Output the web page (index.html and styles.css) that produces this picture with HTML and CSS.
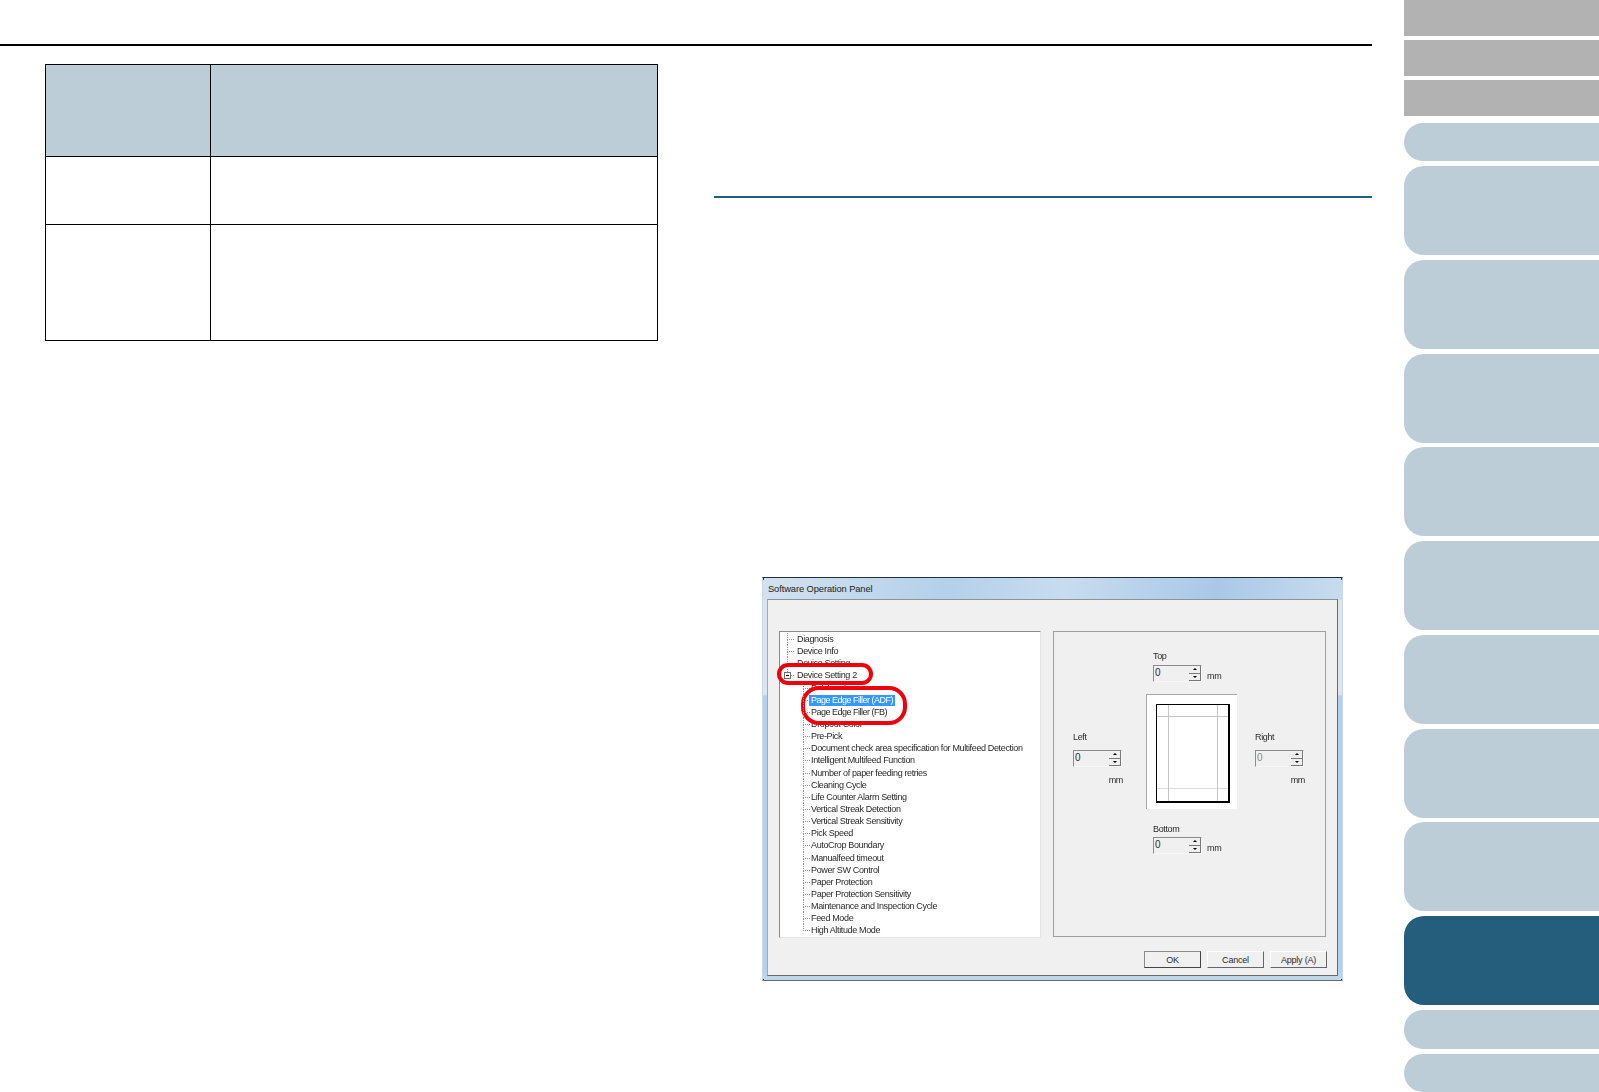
FILE: index.html
```html
<!DOCTYPE html>
<html lang="en">
<head>
<meta charset="utf-8">
<title>Software Operation Panel</title>
<link rel="stylesheet" href="styles.css">
</head>
<body>
<div class="page">
  <main class="main">
    <div class="top-rule"></div>
    <div class="columns">
      <section class="col-left">
        <table class="info-table">
          <colgroup><col class="col-a"><col class="col-b"></colgroup>
          <tr class="row-head"><th></th><th></th></tr>
          <tr class="row-short"><td></td><td></td></tr>
          <tr class="row-tall"><td></td><td></td></tr>
        </table>
      </section>
      <section class="col-right">
        <div class="section-rule"></div>
        <div class="dialog">
          <div class="title-bar">Software Operation Panel</div>
          <div class="client">
            <div class="panes">
              <div class="tree">
                <div class="mark mark-a"></div>
                <div class="mark mark-b"></div>
                <ul class="tree-list">
                  <li class="row top">Diagnosis</li>
                  <li class="row top">Device Info</li>
                  <li class="row top">Device Setting</li>
                  <li class="row top raised last"><span class="expander"></span>Device Setting 2</li>
                  <li class="row child">Patchcode</li>
                  <li class="row child raised edge"><span class="selected">Page Edge Filler (ADF)</span></li>
                  <li class="row child raised edge">Page Edge Filler (FB)</li>
                  <li class="row child">Dropout Color</li>
                  <li class="row child">Pre-Pick</li>
                  <li class="row child">Document check area specification for Multifeed Detection</li>
                  <li class="row child">Intelligent Multifeed Function</li>
                  <li class="row child">Number of paper feeding retries</li>
                  <li class="row child">Cleaning Cycle</li>
                  <li class="row child">Life Counter Alarm Setting</li>
                  <li class="row child">Vertical Streak Detection</li>
                  <li class="row child">Vertical Streak Sensitivity</li>
                  <li class="row child">Pick Speed</li>
                  <li class="row child">AutoCrop Boundary</li>
                  <li class="row child">Manualfeed timeout</li>
                  <li class="row child">Power SW Control</li>
                  <li class="row child">Paper Protection</li>
                  <li class="row child">Paper Protection Sensitivity</li>
                  <li class="row child">Maintenance and Inspection Cycle</li>
                  <li class="row child">Feed Mode</li>
                  <li class="row child last">High Altitude Mode</li>
                </ul>
              </div>
              <div class="settings">
                <div class="side side-left">
                  <div class="label">Left</div>
                  <div class="spin"><span class="spin-value">0</span><span class="spin-buttons"><i class="up"></i><i class="down"></i></span></div>
                  <div class="unit-below">mm</div>
                </div>
                <div class="center">
                  <div class="label label-inset">Top</div>
                  <div class="spin-line">
                    <div class="spin"><span class="spin-value">0</span><span class="spin-buttons"><i class="up"></i><i class="down"></i></span></div>
                    <span class="unit">mm</span>
                  </div>
                  <div class="preview">
                    <div class="sheet">
                      <div class="guides"></div>
                    </div>
                  </div>
                  <div class="label label-inset label-bottom">Bottom</div>
                  <div class="spin-line spin-line-bottom">
                    <div class="spin"><span class="spin-value">0</span><span class="spin-buttons"><i class="up"></i><i class="down"></i></span></div>
                    <span class="unit">mm</span>
                  </div>
                </div>
                <div class="side side-right">
                  <div class="label">Right</div>
                  <div class="spin spin-disabled"><span class="spin-value">0</span><span class="spin-buttons"><i class="up"></i><i class="down"></i></span></div>
                  <div class="unit-below">mm</div>
                </div>
              </div>
            </div>
            <div class="actions">
              <button class="btn btn-default">OK</button>
              <button class="btn">Cancel</button>
              <button class="btn">Apply (A)</button>
            </div>
          </div>
        </div>
      </section>
    </div>
  </main>
  <nav class="sidebar">
    <div class="tab tab-gray"></div>
    <div class="tab tab-gray"></div>
    <div class="tab tab-gray"></div>
    <div class="tab tab-pill tab-first"></div>
    <div class="tab tab-big"></div>
    <div class="tab tab-big"></div>
    <div class="tab tab-big"></div>
    <div class="tab tab-big"></div>
    <div class="tab tab-big"></div>
    <div class="tab tab-big"></div>
    <div class="tab tab-big"></div>
    <div class="tab tab-big"></div>
    <div class="tab tab-big tab-active"></div>
    <div class="tab tab-pill tab-after"></div>
    <div class="tab tab-pill tab-last"></div>
  </nav>
</div>
</body>
</html>
```

FILE: styles.css
```css
html, body {
  margin: 0;
  padding: 0;
  background: #fff;
  overflow: hidden;
}
.page {
  display: flex;
  width: 1599px;
  height: 1092px;
  font-family: "Liberation Sans", Arial, sans-serif;
}
.main {
  width: 1372px;
  padding-top: 44px;
}
.top-rule {
  height: 2px;
  background: #000;
}
.columns {
  display: flex;
}
.col-left {
  width: 714px;
  padding: 18px 0 0 45px;
  box-sizing: border-box;
}
.col-right {
  flex: 1;
  padding-top: 150px;
}
.info-table {
  border-collapse: collapse;
  table-layout: fixed;
  width: 612px;
}
.col-a { width: 165px; }
.col-b { width: 447px; }
.info-table th, .info-table td {
  border: 1px solid #000;
  padding: 0;
}
.info-table th { background: #bdcdd8; }
.row-head { height: 92px; }
.row-short { height: 68px; }
.row-tall { height: 116px; }
.section-rule {
  height: 2px;
  background: #255e7c;
}

/* dialog */
.dialog {
  width: 581px;
  height: 404px;
  margin: 379px 0 0 48px;
  box-sizing: border-box;
  padding: 0 4px 4px;
  border: 1px solid #c8d8e6;
  border-top-color: #1f2f3d;
  border-bottom-color: #5f6f7c;
  background-origin: border-box;
  background-repeat: no-repeat;
  background-image:
    linear-gradient(#1f3a50, #1f3a50),
    linear-gradient(#1f3a50, #1f3a50),
    linear-gradient(#1f3a50, #1f3a50),
    linear-gradient(#1f3a50, #1f3a50),
    linear-gradient(100deg, #d3e2ef 0, #b4d0ea 32%, #c8dcef 52%, #a9c8e8 78%, #c9dcee 100%),
    linear-gradient(180deg, #dce5ee 0, #dce5ee 29%, #b3d0ee 29.5%, #b3d0ee 97%, #c5d8e8 100%);
  background-size: 2px 3px, 2px 3px, 2px 2px, 2px 2px, 100% 23px, 100% 100%;
  background-position: 0 0, 100% 0, 0 100%, 100% 100%, 0 0, 0 0;
  display: flex;
  flex-direction: column;
  color: #2a2a2a;
  font-size: 9px;
  letter-spacing: -0.36px;
}
.title-bar {
  height: 21px;
  flex: none;
  line-height: 22px;
  padding-left: 1px;
  color: #222;
  font-size: 9.3px;
  letter-spacing: -0.08px;
}
.client {
  flex: 1;
  background: #f0f0f0;
  border: 1px solid #6a6a6a;
  border-top-color: #8c9298;
  border-left-color: #a4a8ac;
  padding: 31px 10px 0 11px;
  display: flex;
  flex-direction: column;
}
.panes {
  display: flex;
  gap: 12px;
}

/* tree */
.tree {
  position: relative;
  width: 262px;
  height: 307px;
  box-sizing: border-box;
  background: #fff;
  border: 1px solid #e4e4e4;
  border-top-color: #8a8a8a;
  border-left-color: #8a8a8a;
}
.tree-list {
  list-style: none;
  margin: 0;
  padding: 1px 0 0;
}
.row {
  position: relative;
  height: 12.15px;
  line-height: 12.15px;
  white-space: nowrap;
  filter: blur(0.25px);
}
.top { padding-left: 17px; }
.child { padding-left: 31px; }
.edge { letter-spacing: -0.5px; }
.row::before {
  content: "";
  position: absolute;
  top: 0;
  height: 6px;
  width: 6px;
  border-left: 1px dotted #909090;
  border-bottom: 1px dotted #909090;
}
.row::after {
  content: "";
  position: absolute;
  top: 6px;
  bottom: 0;
  border-left: 1px dotted #909090;
}
.top::before, .top::after { left: 7px; }
.child::before, .child::after { left: 23px; }
.row.last::after { display: none; }
.raised { z-index: 2; }
.expander {
  position: absolute;
  left: 4px;
  top: 3px;
  width: 7px;
  height: 7px;
  box-sizing: border-box;
  border: 1px solid #707070;
  background: #fff;
  z-index: 1;
}
.expander::after {
  content: "";
  position: absolute;
  left: 1px;
  top: 2px;
  width: 3px;
  height: 1px;
  background: #000;
}
.selected {
  display: inline-block;
  height: 11px;
  line-height: 11px;
  margin-left: -2px;
  padding: 0 2px;
  background: #3399ff;
  color: #fff;
}
.mark {
  position: absolute;
  z-index: 1;
  box-sizing: border-box;
  background: #fff;
  border: 4px solid #f0000a;
}
.mark-a {
  left: -3px;
  top: 31px;
  width: 96px;
  height: 22px;
  border-radius: 11px;
}
.mark-b {
  left: 21px;
  top: 54px;
  width: 106px;
  height: 39px;
  border-radius: 18px;
}

/* right settings panel */
.settings {
  width: 273px;
  height: 306px;
  box-sizing: border-box;
  border: 1px solid #a0a0a0;
  padding-left: 18px;
  display: grid;
  grid-template-columns: 74px 109px 1fr;
}
.label {
  height: 12px;
  line-height: 12px;
  filter: blur(0.2px);
}
.label-inset { margin-left: 7px; }
.label-bottom { margin-top: 14px; }
.side-left, .side-right { padding-top: 99px; }
.side .spin { margin-top: 7px; }
.side-left .label { margin-left: 1px; }
.side-left .spin { margin-left: 1px; }
.center { padding-top: 18px; }
.spin-line {
  display: flex;
  align-items: flex-end;
  margin: 3px 0 0 7px;
}
.spin-line-bottom { margin-top: 2px; }
.spin {
  width: 49px;
  height: 17px;
  box-sizing: border-box;
  display: flex;
  justify-content: space-between;
  border: 1px solid #f8f8f8;
  border-top-color: #8c8c8c;
  border-left-color: #8c8c8c;
}
.spin-value {
  padding-left: 1px;
  line-height: 13px;
  font-size: 10px;
}
.spin-disabled { color: #8a8a8a; }
.spin-buttons {
  display: flex;
  flex-direction: column;
  width: 12px;
}
.spin-buttons i {
  flex: 1;
  position: relative;
  display: block;
  border-right: 1px solid #777;
  border-bottom: 1px solid #777;
  background: #f0f0f0;
}
.spin-buttons i::after {
  content: "";
  position: absolute;
  left: 4px;
  top: 2px;
  border-left: 2px solid transparent;
  border-right: 2px solid transparent;
}
.up::after { border-bottom: 2px solid #000; }
.down::after { border-top: 2px solid #000; }
.unit {
  margin-left: 5px;
  line-height: 11px;
  filter: blur(0.2px);
}
.unit-below {
  margin-top: 7px;
  line-height: 12px;
  text-align: right;
  width: 50px;
  filter: blur(0.2px);
}
.side-left .unit-below { width: 51px; }
.preview {
  width: 91px;
  height: 115px;
  box-sizing: border-box;
  margin-top: 12px;
  padding: 9px 0 0 9px;
  background: #fff;
  border-top: 1px solid #a8a8a8;
  border-left: 1px solid #a8a8a8;
}
.sheet {
  width: 74px;
  height: 99px;
  box-sizing: border-box;
  border: 1px solid #000;
  border-right-width: 2px;
  border-bottom-width: 2px;
}
.guides {
  box-sizing: border-box;
  width: 100%;
  height: 100%;
  background:
    linear-gradient(#c4c4c4, #c4c4c4) 11px 0 / 1px 100% no-repeat,
    linear-gradient(#c4c4c4, #c4c4c4) 60px 0 / 1px 100% no-repeat,
    linear-gradient(#c4c4c4, #c4c4c4) 0 11px / 100% 1px no-repeat,
    linear-gradient(#dcdcdc, #dcdcdc) 0 83px / 100% 1px no-repeat;
}

/* buttons */
.actions {
  display: flex;
  justify-content: flex-end;
  gap: 6px;
  margin-top: 13px;
}
.btn {
  width: 57px;
  height: 17px;
  padding: 0;
  box-sizing: border-box;
  background: #f0f0f0;
  color: #2a2a2a;
  font: inherit;
  letter-spacing: -0.2px;
  border: 1px solid #fff;
  border-right-color: #666;
  border-bottom-color: #666;
}
.btn-default {
  border-color: #8a8a8a #444 #444 #8a8a8a;
}

/* sidebar */
.sidebar {
  width: 195px;
  margin-left: 32px;
  display: flex;
  flex-direction: column;
}
.tab { flex: none; background: #bdcdd8; }
.tab-gray {
  height: 36px;
  margin-bottom: 4px;
  background: #b2b2b2;
}
.tab-pill {
  height: 38px;
  border-radius: 19px 0 0 19px;
}
.tab-first { margin: 3px 0 5px; }
.tab-big {
  height: 89px;
  margin-bottom: 4.75px;
  border-radius: 20px 0 0 20px;
}
.tab-active { background: #255e7c; margin-bottom: 5px; }
.tab-after { height: 39px; margin-bottom: 5px; }
```
